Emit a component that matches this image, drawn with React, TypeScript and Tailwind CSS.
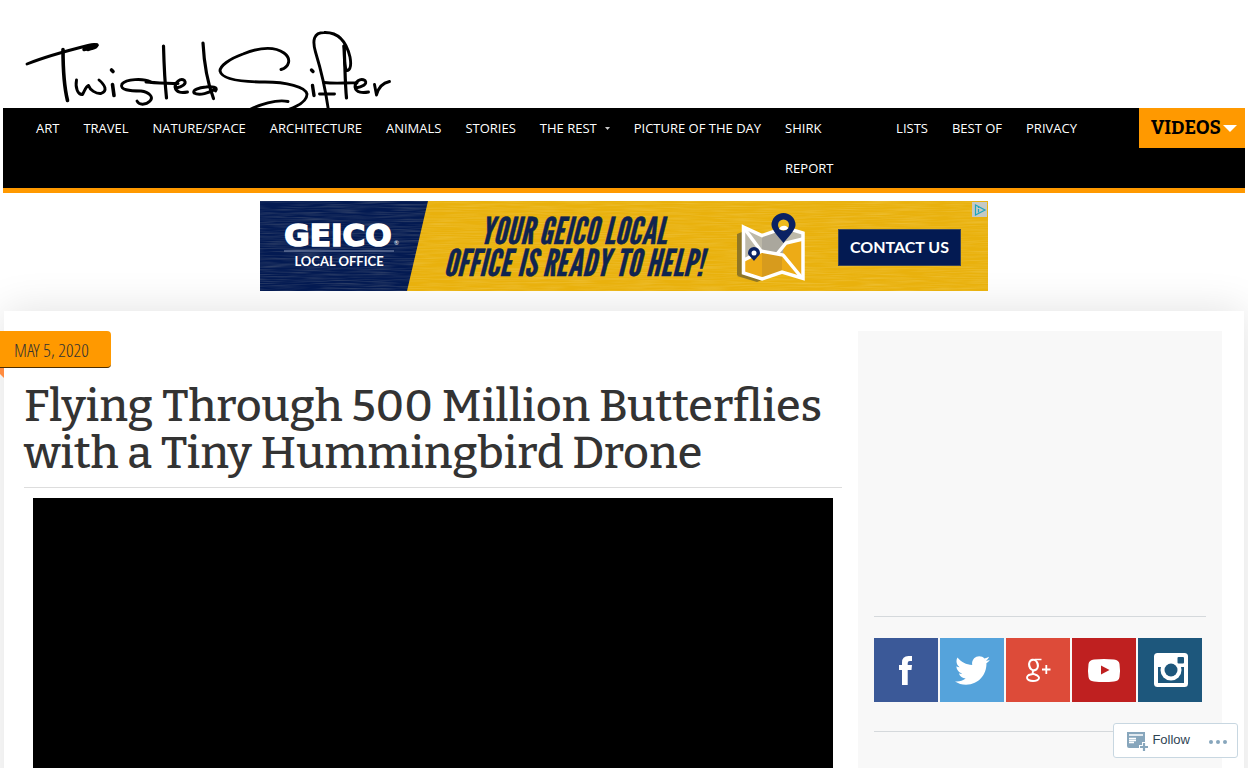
import { FaTwitter } from 'react-icons/fa'

interface NavItem {
  label: string
  hasMenu?: boolean
  narrow?: boolean
}

const navItems: NavItem[] = [
  { label: 'Art' },
  { label: 'Travel' },
  { label: 'Nature/Space' },
  { label: 'Architecture' },
  { label: 'Animals' },
  { label: 'Stories' },
  { label: 'The Rest', hasMenu: true },
  { label: 'Picture of the Day' },
  { label: 'Shirk Report', narrow: true },
  { label: 'Lists' },
  { label: 'Best of' },
  { label: 'Privacy' },
]

function Logo() {
  return (
    <svg
      viewBox="20 20 380 88"
      className="block w-[380px] h-[88px]"
      fill="none"
      stroke="#000"
      strokeWidth="2.9"
      strokeLinecap="round"
      strokeLinejoin="round"
      aria-hidden="true"
    >
      <path d="M27 64C42 58 70 50 88 45.500C92 44.500 97 43.500 97 45.500C96 48.500 89 49.500 85 49" />
      <path d="M84 49.500L97 45L88 49.500" strokeWidth="3.500" />
      <path d="M63 49.500C63 68 64 86 67.500 100.500" strokeWidth="3.600" />
      <path d="M76.500 80C75 88 78 95 82.500 94.500C84 92 86 86 88.500 85.500C90 90 96 94 101 93.500C108 91 105 85 99 80" />
      <path d="M112.500 84.500L114 95.500M111.500 70L113 71.500" strokeWidth="3.600" />
      <path d="M151 82C143 78 126 79 122 84C119 90 130 91 141 91C149 92 154 97 150 101C146 105 139 105.500 137 101" />
      <path d="M146 82C154 83 166 83 178 83.500" strokeWidth="3" />
      <path d="M163.500 46C164 64 165 84 166.500 98" strokeWidth="3.200" />
      <path d="M176 88C182 87 187 84 184.500 80.500C180 77.500 175 83 175 87C176 93 182 93 187.500 92" />
      <path d="M203 43C204 62 208 84 213.500 98.500" strokeWidth="3.200" />
      <path d="M215.500 91C219 87 211 86 206 87C199 87.500 192 90 194 93C199 96 210 93 215 89" />
      <path d="M281 69.500C289 67 292 59 284 53C274 46 258 48 243 54C229 59 220 66 220 71C222 80 242 82 265 82C286 82 306 87 307 94C307 101 297 107 284 111" />
      <path d="M250 109.500C259 105 276 99 288 101.500" />
      <path d="M312.500 85.500L314 95.500M311.500 70L313 71.500" strokeWidth="3.400" />
      <path d="M319.500 94L334.500 94" />
      <path d="M328.500 111C326 92 321 70 315.500 52C312 40 314 32.500 324 32.500C337 32 346 40 350 57C352 68 349 71 346.500 70.500C343 63 345 52 344 46" />
      <path d="M344 46C345 62 345 84 346.500 98" strokeWidth="3.200" />
      <path d="M324 82.500C336 84 346 82.500 357 83" />
      <path d="M355.500 88C362 87 368 84 365 80.500C360 77.500 355 82 355 87C356 93 363 93 368.500 92" />
      <path d="M374.500 84.500L376.500 95C378 89 382 83 389.500 81.500" />
    </svg>
  )
}

function AdBanner() {
  return (
    <a href="#contact" className="block w-[728px] h-[90px]" aria-label="Contact your local office">
      <svg viewBox="0 0 728 90" className="block w-full h-full">
        <defs>
          <filter id="brushed" x="0" y="0" width="100%" height="100%">
            <feTurbulence type="fractalNoise" baseFrequency="0.03 0.8" numOctaves="2" seed="4" />
            <feColorMatrix values="0 0 0 0 1  0 0 0 0 .9  0 0 0 0 .6  1.2 0 0 0 -.45" />
          </filter>
        </defs>
        <rect width="728" height="90" fill="#e9b10d" />
        <path d="M0 0H168L147 90H0Z" fill="#031a52" />
        <rect width="728" height="90" filter="url(#brushed)" opacity=".3" />
        <text x="78" y="45" textAnchor="middle" fontFamily="DejaVu Sans" fontWeight="700" fontSize="31" fill="#fff" stroke="#fff" strokeWidth="1.600">GEICO</text>
        <text x="134" y="44" fontFamily="Lato" fontSize="6" fill="#fff">®</text>
        <path d="M24 50H134" stroke="#8795b5" />
        <text x="79" y="65" textAnchor="middle" fontFamily="Lato" fontWeight="700" fontSize="13" fill="#fff">LOCAL OFFICE</text>
        <text
          fontFamily="'League Gothic', 'Liberation Sans Narrow', 'Liberation Sans', sans-serif"
          fontStyle="italic"
          fontSize="37"
          fill="#10244f"
          stroke="#10244f"
          strokeWidth=".4"
          textAnchor="middle"
        >
          <tspan x="313" y="43">YOUR GEICO LOCAL</tspan>
          <tspan x="313" y="75">OFFICE IS READY TO HELP!</tspan>
        </text>
        <path d="M477 33L482 31V76L477 74ZM482 72L502 79L497 81L477 75Z" fill="#8f7625" />
        <path d="M484 26L502 34L525 26L543 32V78L522 71L502 78L484 72Z" fill="#edab16" />
        <path d="M484 26L502 34L525 26L543 32V37L527 41L518 53L500 50L484 59Z" fill="#bdb9a9" />
        <path d="M502 34L525 26L523 53L502 51Z" fill="#aaa79d" />
        <path d="M502 52L522 54V71L502 78Z" fill="#d79b1d" />
        <g fill="none" stroke="#fff" strokeWidth="3.500">
          <path d="M483.500 26L502 34.500L525 26.500L543 32V77.500L522 71L502 78L483.500 72Z" />
          <path d="M484 27L501 50L523 54L542 77M484 59L501 50.500M517 53L526 42L543 38" />
        </g>
        <path d="M523.500 42C516 33 511.500 28 511.500 24A12 12 0 0 1 535.500 24C535.500 28 531 33 523.500 42Z" fill="#0a2263" />
        <circle cx="523.500" cy="24" r="5.500" fill="#edba1c" />
        <path d="M519 28Q521 24 526 25L528.500 27Q525 31 519 28Z" fill="#fff" />
        <path d="M494 60C490 55 488 54 488 52A6 6 0 0 1 500 52C500 54 498 55 494 60Z" fill="#0a2263" />
        <circle cx="494" cy="52" r="2.500" fill="#fff" />
        <rect x="578.500" y="28.500" width="122" height="36" fill="#031a52" stroke="#3a4558" />
        <text x="639.500" y="52" textAnchor="middle" fontFamily="Lato" fontWeight="700" fontSize="16" fill="#fff">CONTACT US</text>
        <rect x="712" y="1" width="15" height="15" fill="#c5c9c4" />
        <path d="M715.500 4V14L725 9Z" fill="none" stroke="#1fa5bd" strokeWidth="1.200" />
        <path d="M718.500 8V11.500M718.500 6V7" stroke="#1fa5bd" strokeWidth="1.200" />
      </svg>
    </a>
  )
}

function FacebookIcon() {
  return (
    <svg viewBox="0 0 64 64" className="w-16 h-16" fill="#fff" aria-hidden="true">
      <path d="M28 47V32H25V27H28V24.500Q28 18 34.500 18H38V23H35.800Q33.700 23 33.700 25V27H38L37.500 32H33.700V47Z" />
    </svg>
  )
}

function GooglePlusIcon() {
  return (
    <svg viewBox="0 0 64 64" className="w-16 h-16" fill="none" stroke="#fff" aria-hidden="true">
      <path d="M35.500 21.500H28.500" strokeWidth="1.500" />
      <ellipse cx="27.500" cy="27" rx="4.300" ry="5.300" transform="rotate(-15 27.500 27)" strokeWidth="2.200" />
      <path d="M29 32C25.500 33.500 26 35 29 36.500C36 39 33 43 27 43C19.500 42.500 19.500 37.500 24.500 36.500C26 36 28 36 29 36.500" strokeWidth="1.900" />
      <path d="M36 31.500H44.500M40.300 27V36" strokeWidth="1.800" />
    </svg>
  )
}

function YoutubeIcon() {
  return (
    <svg viewBox="0 0 64 64" className="w-16 h-16" aria-hidden="true">
      <path d="M22 21.500Q32 20.500 42 21.500Q47 22 47.500 26Q48.500 32.500 47.500 39Q47 43 42 43.500Q32 44.500 22 43.500Q17 43 16.500 39Q15.500 32.500 16.500 26Q17 22 22 21.500Z" fill="#fff" />
      <path d="M29 27.500L37.500 32L29 36.500Z" fill="#bf2020" />
    </svg>
  )
}

function InstagramIcon() {
  return (
    <svg viewBox="0 0 64 64" className="w-16 h-16" aria-hidden="true">
      <rect x="16" y="15" width="34" height="34" rx="3.500" fill="#fff" />
      <rect x="20" y="29" width="26" height="16" fill="#1d577c" />
      <circle cx="33" cy="32" r="10.500" fill="#fff" />
      <circle cx="33" cy="32" r="6.500" fill="#1d577c" />
      <rect x="39.500" y="19" width="6.500" height="6.500" rx="1" fill="#1d577c" />
    </svg>
  )
}

function Sidebar() {
  const box = 'flex w-16 h-16 items-center justify-center text-white'

  return (
    <aside className="w-[364px] shrink-0 bg-[#f8f8f8] px-4 pb-5">
      <div className="h-[285px]" />
      <hr className="border-[#d5d9dc]" />
      <div className="flex gap-0.5 py-[21px]">
        <a href="#facebook" aria-label="Facebook" className={`${box} bg-[#3b5998]`}>
          <FacebookIcon />
        </a>
        <a href="#twitter" aria-label="Twitter" className={`${box} bg-[#55a3db]`}>
          <FaTwitter className="h-[35px] w-[35px]" />
        </a>
        <a href="#google" aria-label="Google Plus" className={`${box} bg-[#dd4b39]`}>
          <GooglePlusIcon />
        </a>
        <a href="#youtube" aria-label="YouTube" className={`${box} bg-[#bf2020]`}>
          <YoutubeIcon />
        </a>
        <a href="#instagram" aria-label="Instagram" className={`${box} bg-[#1d577c]`}>
          <InstagramIcon />
        </a>
      </div>
      <hr className="mt-2 border-[#d5d9dc]" />
    </aside>
  )
}

function FollowBar() {
  return (
    <div className="fixed right-2.5 bottom-2.5 flex h-[35px] items-center justify-between rounded-[3px] border border-[#c8d7e1] bg-white pr-2.5 pl-[13px] font-['Liberation_Sans',sans-serif]">
      <button type="button" className="flex items-center gap-1 text-[13px] text-[#2e4453]">
        <svg viewBox="0 0 21 20" className="w-[21px] h-5" aria-hidden="true">
          <path d="M0 1H18V11H15V14H12V17H2Q0 17 0 15Z" fill="#87a6bc" />
          <path d="M2 4H16M2 7.500H9M2 9.500H9M2 11.500H7" stroke="#fff" strokeWidth="1.300" />
          <path d="M17 12V20M13 16H21" stroke="#87a6bc" strokeWidth="2.200" />
        </svg>
        <span className="pb-0.5">Follow</span>
      </button>
      <button type="button" aria-label="More options" className="ml-[19px]">
        <svg viewBox="0 0 18 6" className="w-[18px] h-1.5" fill="#87a6bc" aria-hidden="true">
          <circle cx="2" cy="4" r="2" />
          <circle cx="9" cy="4" r="2" />
          <circle cx="16" cy="4" r="2" />
        </svg>
      </button>
    </div>
  )
}

export default function App() {
  return (
    <div className="min-h-screen overflow-x-hidden bg-white font-['Open_Sans',sans-serif]">
      <header>
        <a href="#home" aria-label="TwistedSifter" className="block w-fit pt-5 pl-5">
          <Logo />
        </a>
        <nav className="mx-[3px] flex items-start justify-between border-b-[5px] border-[#ff9900] bg-black pl-[21px]">
          <ul className="flex text-[13px] leading-10 text-white uppercase">
            {navItems.map(item => (
              <li key={item.label} className={item.narrow ? 'w-[111px] pr-10' : 'whitespace-nowrap'}>
                <a href="#section" className="flex items-center px-3">
                  {item.label}
                  {item.hasMenu && (
                    <svg viewBox="0 0 5 3" className="ml-2 h-[3px] w-[5px]" fill="#ccc" aria-hidden="true">
                      <path d="M0 0H5L2.500 3Z" />
                    </svg>
                  )}
                </a>
              </li>
            ))}
          </ul>
          <button
            type="button"
            className="flex h-10 w-[106px] shrink-0 items-center bg-[#ff9900] pl-3 font-['Bitter','DejaVu_Serif',serif] text-[19px] font-bold text-black"
          >
            VIDEOS
            <svg viewBox="0 0 14 7" className="ml-0.5 h-[7px] w-3.5" fill="#fff" aria-hidden="true">
              <path d="M0 0H14L7 7Z" />
            </svg>
          </button>
        </nav>
      </header>

      <div className="relative z-10 mt-2 mb-5 flex justify-center">
        <AdBanner />
      </div>

      <main className="mx-1 flex gap-4 bg-white pt-5 pr-[22px] pl-5 shadow-[0_0_40px_rgba(0,0,0,0.12)]">
        <article className="min-w-0 flex-1">
          <div className="relative -ml-[30px] w-fit">
            <time
              dateTime="2020-05-05"
              className="block h-[37px] rounded-r-sm border-b border-[#4d2e00] bg-[#ff9900] pr-[22px] pl-5 pt-px font-['Open_Sans_Condensed_Light','Open_Sans_Light_Condensed','Liberation_Sans_Narrow','Open_Sans',sans-serif] text-[19px] leading-9 font-light text-[#333] uppercase"
            >
              May 5, 2020
            </time>
            <svg viewBox="0 0 10 10" className="absolute top-full left-0 h-2.5 w-2.5" fill="#ff8c40" aria-hidden="true">
              <path d="M0 0H10V10Z" />
            </svg>
          </div>
          <h1 className="mt-[15px] border-b border-[#ddd] pb-2.5 font-['Bitter','DejaVu_Serif',serif] text-[45px] leading-[47px] font-medium text-[#333]">
            Flying Through 500 Million Butterflies with a Tiny Hummingbird Drone
          </h1>
          <div className="mx-[9px] mt-2.5 aspect-video bg-black" />
        </article>
        <Sidebar />
      </main>

      <FollowBar />
    </div>
  )
}
